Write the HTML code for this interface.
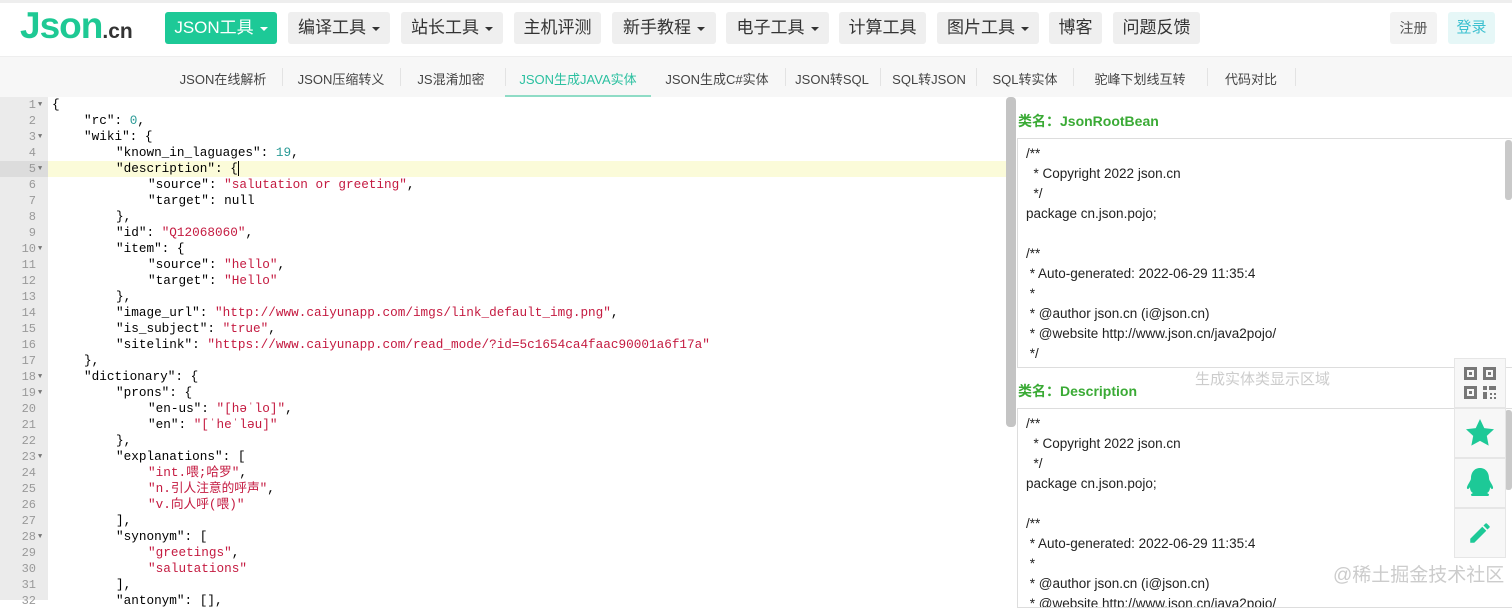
<!DOCTYPE html><html><head><meta charset="utf-8"><style>
*{margin:0;padding:0;box-sizing:border-box}
body{width:1512px;height:600px;overflow:hidden;background:#fff;font-family:"Liberation Sans","Noto Sans CJK SC",sans-serif;position:relative}
.top{position:absolute;left:0;top:0;width:1512px;height:3px;background:#eee}
.logo{position:absolute;left:20px;top:5px;font-size:37px;font-weight:bold;color:#1ec994;letter-spacing:-1px}
.logo small{font-size:21px;color:#333;letter-spacing:0}
.btn{position:absolute;top:12px;height:32px;background:#efefef;border-radius:3px;font-size:17px;color:#333;line-height:32px;text-align:center}
.btn.a{background:#1dc997;color:#fff}
.car{display:inline-block;width:0;height:0;border-left:4px solid transparent;border-right:4px solid transparent;border-top:4px solid currentColor;vertical-align:middle;margin-left:6px}
.sub{position:absolute;left:0;top:56px;width:1512px;height:41px;background:#f7f7f7;border-top:1px solid #eee}
.si{position:absolute;top:12px;font-size:13px;color:#444;transform:translateX(-50%);white-space:nowrap}
.sep{position:absolute;top:11px;width:1px;height:18px;background:#e3e3e3}
.gut{position:absolute;left:0;top:97px;width:48px;height:503px;background:#ebebeb}
.ln{position:absolute;left:0;width:36px;text-align:right;font-family:"Liberation Mono",monospace;font-size:12px;color:#999;height:16px;line-height:16px}
.ln i{position:absolute;left:38px;top:0;font-style:normal;font-size:7px;color:#777}
.cl{position:absolute;left:48px;font-family:"Liberation Mono","Noto Sans CJK SC",monospace;font-size:12.7px;height:16px;line-height:16px;color:#000;white-space:pre}
.s{color:#c41a40}.n{color:#2a9a96}
.hl{position:absolute;left:48px;top:161px;width:958px;height:16px;background:#fbfbd9}
.hlg{position:absolute;left:0;top:161px;width:48px;height:16px;background:#dcdcdc}
.vs{position:absolute;left:1006px;top:97px;width:10px;height:330px;background:#c4c4c4;border-radius:4px}
.rh{position:absolute;left:1018px;font-size:14px;font-weight:bold;color:#3aaa35}
.box{position:absolute;left:1017px;width:495px;border:1px solid #ddd;border-right:none;font-size:13.5px;color:#222;line-height:20px;padding:5px 8px;white-space:pre;overflow:hidden}
.rs{position:absolute;left:1505px;width:7px;background:#c9c9c9;border-radius:3px}
.side{position:absolute;left:1454px;width:52px;height:50px;background:#f7f7f7;border:1px solid #e6e6e6;display:flex;align-items:center;justify-content:center}
</style></head><body>
<div class="top"></div>
<div class="logo">Json<small>.cn</small></div>
<div class="btn a" style="left:165px;width:112px">JSON工具<span class="car"></span></div>
<div class="btn" style="left:288px;width:102px">编译工具<span class="car"></span></div>
<div class="btn" style="left:401px;width:102px">站长工具<span class="car"></span></div>
<div class="btn" style="left:514px;width:87px">主机评测</div>
<div class="btn" style="left:612px;width:104px">新手教程<span class="car"></span></div>
<div class="btn" style="left:726px;width:103px">电子工具<span class="car"></span></div>
<div class="btn" style="left:839px;width:87px">计算工具</div>
<div class="btn" style="left:937px;width:102px">图片工具<span class="car"></span></div>
<div class="btn" style="left:1049px;width:53px">博客</div>
<div class="btn" style="left:1113px;width:87px">问题反馈</div>
<div class="btn" style="left:1390px;width:47px;font-size:14px;color:#555;background:#f3f3f3">注册</div>
<div class="btn" style="left:1448px;width:47px;font-size:15px;color:#3cc0d0;background:#e6f7f7">登录</div>
<div class="sub">
<span class="si" style="left:223px">JSON在线解析</span><span class="sep" style="left:282px"></span>
<span class="si" style="left:341px">JSON压缩转义</span><span class="sep" style="left:400px"></span>
<span class="si" style="left:451px">JS混淆加密</span><span class="sep" style="left:505px"></span>
<span class="si" style="left:578px;color:#2bc0a0">JSON生成JAVA实体</span><div style="position:absolute;left:505px;top:38px;width:146px;height:2px;background:#8fdcc6"></div>
<span class="si" style="left:717px">JSON生成C#实体</span><span class="sep" style="left:785px"></span>
<span class="si" style="left:832px">JSON转SQL</span><span class="sep" style="left:880px"></span>
<span class="si" style="left:929px">SQL转JSON</span><span class="sep" style="left:976px"></span>
<span class="si" style="left:1025px">SQL转实体</span><span class="sep" style="left:1073px"></span>
<span class="si" style="left:1140px">驼峰下划线互转</span><span class="sep" style="left:1207px"></span>
<span class="si" style="left:1251px">代码对比</span><span class="sep" style="left:1295px"></span>
</div>
<div class="gut"></div><div class="hl"></div><div class="hlg"></div>
<div id="code"></div>
<div class="vs"></div>
<div class="rh" style="top:111px">类名：JsonRootBean</div>
<div class="box" style="top:138px;height:230px">/**
  * Copyright 2022 json.cn
  */
package cn.json.pojo;

/**
 * Auto-generated: 2022-06-29 11:35:4
 *
 * @author json.cn (i@json.cn)
 * @website http://www.json.cn/java2pojo/
 */</div>
<div class="rs" style="top:140px;height:60px"></div>
<div class="rh" style="top:381px">类名：Description</div>
<div style="position:absolute;left:1195px;top:368px;font-size:15px;color:#ccc">生成实体类显示区域</div>
<div class="box" style="top:408px;height:200px">/**
  * Copyright 2022 json.cn
  */
package cn.json.pojo;

/**
 * Auto-generated: 2022-06-29 11:35:4
 *
 * @author json.cn (i@json.cn)
 * @website http://www.json.cn/java2pojo/</div>
<div class="rs" style="top:410px;height:80px"></div>
<div class="side" style="top:358px"><svg width="34" height="34" viewBox="0 0 34 34" fill="#777"><path d="M1 1h13v13H1zM4 4v7h7V4zM20 1h13v13H20zM23 4v7h7V4zM1 20h13v13H1zM4 23v7h7v-7zM6 6h3v3H6zM25 6h3v3h-3zM6 25h3v3H6zM20 20h4v4h-4zM26 20h7v4h-7zM20 26h4v7h-4zM27 27h2v2h-2zM31 27h2v2h-2zM27 31h2v2h-2zM31 31h2v2h-2z"/></svg></div>
<div class="side" style="top:408px"><svg width="32" height="32" viewBox="0 0 24 24" fill="#1dc997"><path d="M12 1.5l3.2 6.8 7.3.9-5.4 5 1.4 7.3L12 17.9l-6.5 3.6 1.4-7.3-5.4-5 7.3-.9z"/></svg></div>
<div class="side" style="top:458px"><svg width="30" height="32" viewBox="0 0 30 32" fill="#1dc997"><path d="M15 1c6 0 9 5 9 10 0 2 1 3 2 5 2 3 3 6 1 6-1 0-2-2-2-2 0 3-1 5-3 6 2 1 3 2 1 3H7c-2-1-1-2 1-3-2-1-3-3-3-6 0 0-1 2-2 2-2 0-1-3 1-6 1-2 2-3 2-5 0-5 3-10 9-10z"/></svg></div>
<div class="side" style="top:508px"><svg width="26" height="26" viewBox="0 0 24 24" fill="#1dc997"><path d="M3 17.3V21h3.7L17.8 9.9l-3.7-3.7zM20.7 7c.4-.4.4-1 0-1.4l-2.3-2.3c-.4-.4-1-.4-1.4 0l-1.8 1.8 3.7 3.7z"/></svg></div>
<div style="position:absolute;left:1333px;top:560px;font-size:19px;color:#ccc">@稀土掘金技术社区</div>
<script>
const L=[[0,'{',1],[1,'"rc": <n>0</n>,'],[1,'"wiki": {',1],[2,'"known_in_laguages": <n>19</n>,'],[2,'"description": {|',1],[3,'"source": <s>"salutation or greeting"</s>,'],[3,'"target": null'],[2,'},'],[2,'"id": <s>"Q12068060"</s>,'],[2,'"item": {',1],[3,'"source": <s>"hello"</s>,'],[3,'"target": <s>"Hello"</s>'],[2,'},'],[2,'"image_url": <s>"http://www.caiyunapp.com/imgs/link_default_img.png"</s>,'],[2,'"is_subject": <s>"true"</s>,'],[2,'"sitelink": <s>"https://www.caiyunapp.com/read_mode/?id=5c1654ca4faac90001a6f17a"</s>'],[1,'},'],[1,'"dictionary": {',1],[2,'"prons": {',1],[3,'"en-us": <s>"[həˈlo]"</s>,'],[3,'"en": <s>"[ˈheˈləu]"</s>'],[2,'},'],[2,'"explanations": [',1],[3,'<s>"int.喂;哈罗"</s>,'],[3,'<s>"n.引人注意的呼声"</s>,'],[3,'<s>"v.向人呼(喂)"</s>'],[2,'],'],[2,'"synonym": [',1],[3,'<s>"greetings"</s>,'],[3,'<s>"salutations"</s>'],[2,'],'],[2,'"antonym": [],']];
let h='';L.forEach((l,i)=>{const y=97+i*16;h+=`<div class="ln" style="top:${y}px">${i+1}${l[2]?'<i>▼</i>':''}</div>`;
let t=l[1].replace(/<n>/g,'<span class="n">').replace(/<\/n>/g,'</span>').replace(/<s>/g,'<span class="s">').replace(/<\/s>/g,'</span>').replace('|','<span style="border-left:1px solid #000"></span>');
h+=`<div class="cl" style="top:${y}px;left:${52+l[0]*32}px">${t}</div>`;});
document.getElementById('code').innerHTML=h;
</script>
</body></html>
